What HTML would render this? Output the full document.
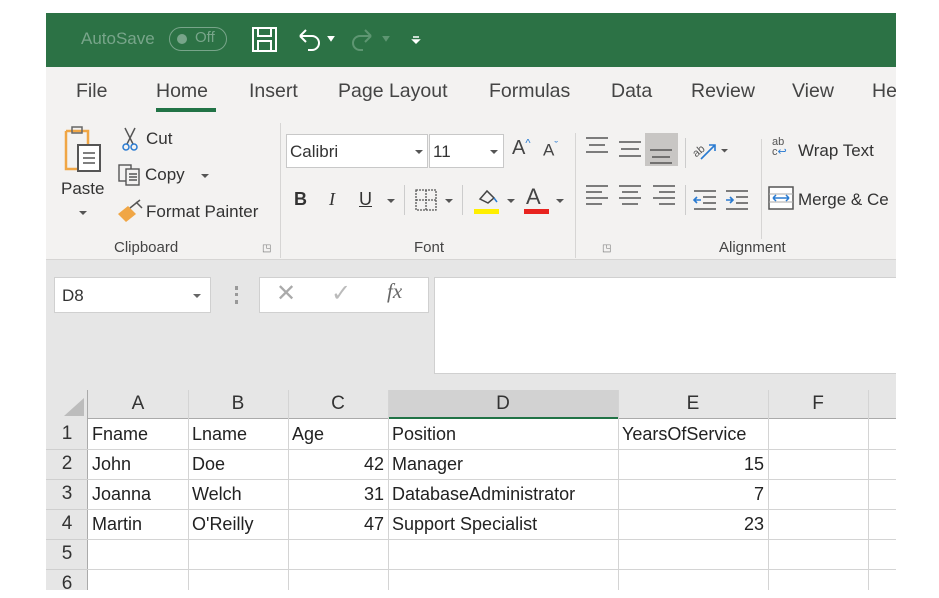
<!DOCTYPE html>
<html><head><style>
*{margin:0;padding:0;box-sizing:border-box}
body{width:939px;height:598px;background:#fff;position:relative;overflow:hidden;font-family:"Liberation Sans",sans-serif;color:#333}
.a{position:absolute;white-space:nowrap}
#app{position:absolute;left:46px;top:13px;width:850px;height:577px;overflow:hidden;background:#e6e6e6}
.t{font-size:19.5px;color:#444}
.s{font-size:17px;color:#333}
.cell{position:absolute;font-size:18px;color:#222;line-height:30px}
</style></head><body>
<div id="app">
<div class="a" style="left:0;top:0;width:850px;height:54px;background:#2c7245"></div>
<div class="a" style="left:35px;top:16px;font-size:17px;color:#78a58a">AutoSave</div>
<div class="a" style="left:123px;top:14px;width:58px;height:24px;border:1.5px solid #78a58a;border-radius:12px"></div>
<div class="a" style="left:131px;top:21px;width:10px;height:10px;border-radius:5px;background:#78a58a"></div>
<div class="a" style="left:149px;top:16px;font-size:15px;color:#78a58a">Off</div>
<svg class="a" style="left:204px;top:12px" width="30" height="30" viewBox="0 0 30 30" fill="none" stroke="#fff" stroke-width="2"><rect x="3" y="3" width="23" height="23"/><rect x="8" y="3" width="13" height="8"/><rect x="8" y="16" width="13" height="10"/></svg>
<svg class="a" style="left:250px;top:13px" width="50" height="28" viewBox="0 0 50 28" fill="none" stroke="#fff" stroke-width="2"><path d="M4 10 L10 4 M4 10 L10 16 M4 10 H16 a7 7 0 0 1 0 14 h-4"/><path d="M33 11 l4 0 -2 3z" fill="#fff"/></svg>
<svg class="a" style="left:305px;top:13px" width="70" height="28" viewBox="0 0 70 28" fill="none" stroke="#5e9672" stroke-width="2"><path d="M20 10 L14 4 M20 10 L14 16 M20 10 H9 a7 7 0 0 0 0 14 h3"/><path d="M33 11 l4 0 -2 3z" fill="#5e9672"/><path d="M62 11 h6 M62 14 l3 3 3-3z" stroke="#fff" fill="#fff" stroke-width="1.5"/></svg>
<div class="a" style="left:0;top:54px;width:850px;height:193px;background:#f3f2f1"></div>
<div class="a t" style="left:30px;top:67px">File</div>
<div class="a t" style="left:110px;top:67px">Home</div>
<div class="a" style="left:110px;top:95px;width:60px;height:4px;background:#217346"></div>
<div class="a t" style="left:203px;top:67px">Insert</div>
<div class="a t" style="left:292px;top:67px">Page Layout</div>
<div class="a t" style="left:443px;top:67px">Formulas</div>
<div class="a t" style="left:565px;top:67px">Data</div>
<div class="a t" style="left:645px;top:67px">Review</div>
<div class="a t" style="left:746px;top:67px">View</div>
<div class="a t" style="left:826px;top:67px">He</div>
<svg class="a" style="left:16px;top:112px" width="48" height="50" viewBox="0 0 48 50" fill="none"><path d="M4 6 h22 v14 M4 6 v38 h12" stroke="#f0a645" stroke-width="2.5"/><rect x="10" y="2" width="10" height="6" stroke="#666" stroke-width="1.5"/><rect x="16" y="20" width="22" height="26" fill="#fff" stroke="#555" stroke-width="2"/><path d="M21 28h12M21 33h12M21 38h12" stroke="#555" stroke-width="1.5"/></svg>
<div class="a s" style="left:15px;top:166px">Paste</div>
<div class="a" style="left:33px;top:198px;border-left:4px solid transparent;border-right:4px solid transparent;border-top:4px solid #555"></div>
<svg class="a" style="left:73px;top:113px" width="22" height="26" viewBox="0 0 22 26" fill="none" stroke="#555" stroke-width="1.5"><path d="M6 2 L14 18 M16 2 L8 18"/><circle cx="7" cy="21" r="3" stroke="#2a7bd1"/><circle cx="15" cy="21" r="3" stroke="#2a7bd1"/></svg>
<div class="a s" style="left:100px;top:116px">Cut</div>
<svg class="a" style="left:71px;top:150px" width="26" height="24" viewBox="0 0 26 24" fill="none" stroke="#555" stroke-width="1.4"><rect x="2" y="2" width="12" height="16"/><rect x="9" y="6" width="13" height="16" fill="#f3f2f1"/><path d="M12 11h8M12 14h8M12 17h8"/></svg>
<div class="a s" style="left:99px;top:152px">Copy</div>
<div class="a" style="left:155px;top:161px;border-left:4px solid transparent;border-right:4px solid transparent;border-top:4px solid #555"></div>
<svg class="a" style="left:70px;top:185px" width="30" height="26" viewBox="0 0 30 26"><path d="M2 16 L12 8 L20 16 L10 24Z" fill="#f0a645"/><path d="M14 10 L24 2 M20 4 l6 6" stroke="#555" stroke-width="1.5" fill="none"/></svg>
<div class="a s" style="left:100px;top:189px">Format Painter</div>
<div class="a" style="left:68px;top:226px;font-size:15px;color:#444">Clipboard</div>
<div class="a" style="left:216px;top:230px;font-size:10px;color:#777">◳</div>
<div class="a" style="left:234px;top:110px;width:1px;height:135px;background:#d6d5d4"></div>
<div class="a" style="left:240px;top:121px;width:142px;height:34px;background:#fff;border:1px solid #c8c8c8"></div>
<div class="a" style="left:244px;top:129px;font-size:17px;color:#333">Calibri</div>
<div class="a" style="left:369px;top:137px;border-left:4px solid transparent;border-right:4px solid transparent;border-top:4px solid #555"></div>
<div class="a" style="left:383px;top:121px;width:75px;height:34px;background:#fff;border:1px solid #c8c8c8"></div>
<div class="a" style="left:387px;top:129px;font-size:17px;color:#333">11</div>
<div class="a" style="left:444px;top:137px;border-left:4px solid transparent;border-right:4px solid transparent;border-top:4px solid #555"></div>
<div class="a" style="left:466px;top:124px;font-size:20px;color:#444">A<sup style="font-size:11px;color:#2a7bd1">^</sup></div>
<div class="a" style="left:497px;top:127px;font-size:17px;color:#444">A<sup style="font-size:11px;color:#2a7bd1">ˇ</sup></div>
<div class="a" style="left:248px;top:176px;font-size:18px;font-weight:bold;color:#333">B</div>
<div class="a" style="left:283px;top:176px;font-size:18px;font-style:italic;font-family:'Liberation Serif',serif;color:#333">I</div>
<div class="a" style="left:313px;top:176px;font-size:18px;text-decoration:underline;color:#333">U</div>
<div class="a" style="left:341px;top:186px;border-left:4px solid transparent;border-right:4px solid transparent;border-top:4px solid #555"></div>
<div class="a" style="left:358px;top:172px;width:1px;height:30px;background:#ccc"></div>
<svg class="a" style="left:368px;top:175px" width="24" height="24" viewBox="0 0 24 24" fill="none" stroke="#555" stroke-width="1.3" stroke-dasharray="2 1"><rect x="2" y="2" width="20" height="20"/><path d="M12 2v20M2 12h20"/></svg>
<div class="a" style="left:399px;top:186px;border-left:4px solid transparent;border-right:4px solid transparent;border-top:4px solid #555"></div>
<div class="a" style="left:416px;top:172px;width:1px;height:30px;background:#ccc"></div>
<svg class="a" style="left:430px;top:174px" width="24" height="20" viewBox="0 0 24 20" fill="none" stroke="#444" stroke-width="1.5"><path d="M4 12 L11 4 L18 11 L12 16Z"/><path d="M18 11 l3 4" stroke="#2a7bd1"/></svg>
<div class="a" style="left:428px;top:196px;width:25px;height:5px;background:#ffef00"></div>
<div class="a" style="left:461px;top:186px;border-left:4px solid transparent;border-right:4px solid transparent;border-top:4px solid #555"></div>
<div class="a" style="left:480px;top:171px;font-size:22px;color:#444">A</div>
<div class="a" style="left:478px;top:196px;width:25px;height:5px;background:#e8231f"></div>
<div class="a" style="left:510px;top:186px;border-left:4px solid transparent;border-right:4px solid transparent;border-top:4px solid #555"></div>
<div class="a" style="left:368px;top:226px;font-size:15px;color:#444">Font</div>
<div class="a" style="left:556px;top:230px;font-size:10px;color:#777">◳</div>
<div class="a" style="left:529px;top:120px;width:1px;height:125px;background:#d6d5d4"></div>
<svg class="a" style="left:535px;top:118px" width="100" height="40" viewBox="0 0 100 40" stroke="#555" stroke-width="1.6"><path d="M5 7h22M8 14h16M5 21h22"/><path d="M38 11h22M40 18h18M38 25h22"/><rect x="64" y="2" width="33" height="33" fill="#c8c6c4" stroke="none"/><path d="M69 19h22M71 26h18M69 32h22"/></svg>
<svg class="a" style="left:535px;top:165px" width="100" height="40" viewBox="0 0 100 40" stroke="#555" stroke-width="1.6"><path d="M5 8h22M5 14h16M5 20h22M5 26h16"/><path d="M38 8h22M41 14h16M38 20h22M41 26h16"/><path d="M72 8h22M78 14h16M72 20h22M78 26h16"/></svg>
<div class="a" style="left:639px;top:125px;width:1px;height:30px;background:#ccc"></div>
<div class="a" style="left:639px;top:172px;width:1px;height:30px;background:#ccc"></div>
<svg class="a" style="left:645px;top:124px" width="40" height="26" viewBox="0 0 40 26" fill="none"><text x="2" y="16" font-size="11" fill="#555" transform="rotate(-40 10 14)" font-family="Liberation Sans">ab</text><path d="M10 22 L24 8 M18 8h6v6" stroke="#2a7bd1" stroke-width="1.6"/><path d="M30 12h7l-3.5 3.5z" fill="#555"/></svg>
<svg class="a" style="left:645px;top:174px" width="62" height="26" viewBox="0 0 62 26" fill="none" stroke="#555" stroke-width="1.6"><path d="M3 4h22M12 10h13M12 16h13M3 22h22"/><path d="M10 13H3m3-3l-3 3 3 3" stroke="#2a7bd1"/><path d="M35 4h22M45 10h12M45 16h12M35 22h22"/><path d="M35 13h7m-3-3l3 3-3 3" stroke="#2a7bd1"/></svg>
<div class="a" style="left:715px;top:126px;width:1px;height:100px;background:#d6d5d4"></div>
<div class="a" style="left:726px;top:124px;font-size:11px;color:#555;line-height:10px">ab<br>c<span style="color:#2a7bd1">↩</span></div>
<div class="a s" style="left:752px;top:128px">Wrap Text</div>
<svg class="a" style="left:722px;top:173px" width="26" height="24" viewBox="0 0 26 24" fill="none"><rect x="1" y="1" width="24" height="22" stroke="#555" stroke-width="1.5" fill="#fff"/><path d="M1 8h24M1 16h24" stroke="#aaa"/><path d="M5 12h16M5 12l3-3M5 12l3 3M21 12l-3-3M21 12l-3 3" stroke="#2a7bd1" stroke-width="1.5"/></svg>
<div class="a s" style="left:752px;top:177px">Merge &amp; Ce</div>
<div class="a" style="left:673px;top:226px;font-size:15px;color:#444">Alignment</div>
<div class="a" style="left:0;top:246px;width:850px;height:1px;background:#d6d5d4"></div>
<div class="a" style="left:8px;top:264px;width:157px;height:36px;background:#fff;border:1px solid #d0d0d0"></div>
<div class="a" style="left:16px;top:273px;font-size:17px;color:#333">D8</div>
<div class="a" style="left:147px;top:281px;border-left:4px solid transparent;border-right:4px solid transparent;border-top:4px solid #666"></div>
<div class="a" style="left:189px;top:273px;width:3px;height:18px;border-left:3px dotted #999"></div>
<div class="a" style="left:213px;top:264px;width:170px;height:36px;background:#fff;border:1px solid #d0d0d0"></div>
<div class="a" style="left:230px;top:266px;font-size:24px;color:#aaa">✕</div>
<div class="a" style="left:285px;top:266px;font-size:24px;color:#bbb">✓</div>
<div class="a" style="left:341px;top:266px;font-size:21px;font-style:italic;font-family:'Liberation Serif',serif;color:#666">fx</div>
<div class="a" style="left:388px;top:264px;width:470px;height:97px;background:#fff;border:1px solid #d0d0d0"></div>
<div class="a" style="left:0;top:377px;width:850px;height:200px;background:#fff"></div>
<div class="a" style="left:0;top:377px;width:850px;height:29px;background:#e6e6e6;border-bottom:1px solid #aaa"></div>
<div class="a" style="left:0;top:377px;width:42px;height:200px;background:#e6e6e6;border-right:1px solid #aaa"></div>
<div class="a" style="left:18px;top:385px;width:0;height:0;border-left:20px solid transparent;border-bottom:18px solid #bcbcbc"></div>
<div class="a" style="left:342px;top:377px;width:230px;height:29px;background:#d2d2d2;border-bottom:2px solid #217346"></div>
<div id="g"></div>
</div>
<script>
var h='';
var cols=[42,142,242,342,572,722,822,922];
var names=['A','B','C','D','E','F'];
for(var i=1;i<7;i++){h+='<div class="a" style="left:'+(cols[i])+'px;top:377px;width:1px;height:200px;background:#d4d4d4"></div>';}
for(i=0;i<6;i++){h+='<div class="a" style="left:'+cols[i]+'px;top:380px;width:'+(cols[i+1]-cols[i])+'px;text-align:center;font-size:19px;color:#333">'+names[i]+'</div>';}
for(var r=0;r<6;r++){var y=406+r*30;h+='<div class="a" style="left:42px;top:'+(y+30)+'px;width:808px;height:1px;background:#d4d4d4"></div>';h+='<div class="a" style="left:0;top:'+(y+30)+'px;width:42px;height:1px;background:#cfcfcf"></div>';h+='<div class="cell" style="left:0;top:'+y+'px;width:42px;text-align:center;font-size:19px;color:#333">'+(r+1)+'</div>';}
var d=[['Fname','Lname','Age','Position','YearsOfService'],['John','Doe','42','Manager','15'],['Joanna','Welch','31','DatabaseAdministrator','7'],['Martin',"O'Reilly",'47','Support Specialist','23']];
for(r=0;r<4;r++){for(var c=0;c<5;c++){var v=d[r][c],num=/^\d+$/.test(v);h+='<div class="cell" style="left:'+(cols[c]+4)+'px;top:'+(406+r*30)+'px;width:'+(cols[c+1]-cols[c]-8)+'px;text-align:'+(num?'right':'left')+'">'+v+'</div>';}}
document.getElementById('g').innerHTML=h;
</script>
</body></html>
